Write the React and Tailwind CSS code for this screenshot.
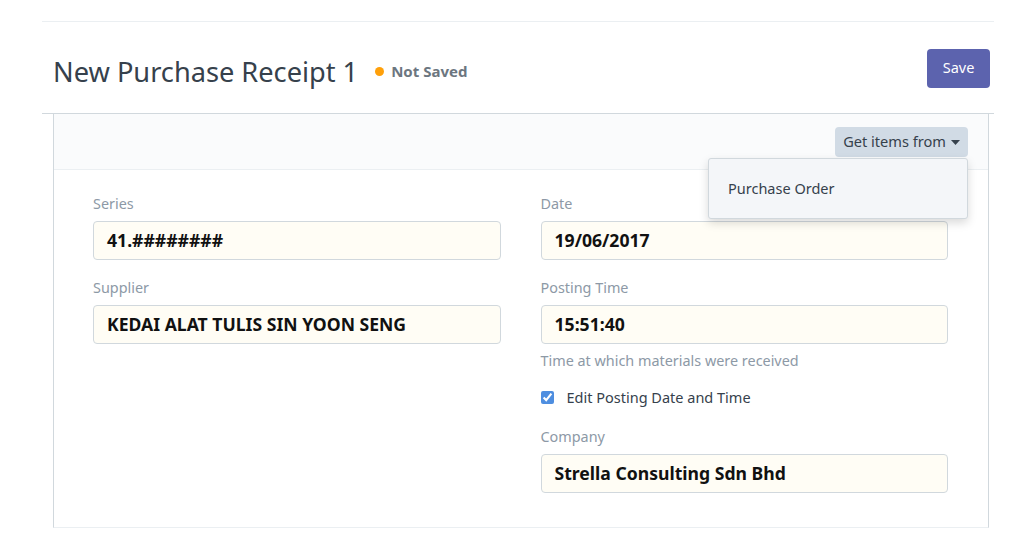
import { useState } from 'react'

function Field({ label, value, help }) {
  return (
    <div className="flex flex-col">
      <label className="text-[14.4px] leading-[20px] text-[#8d99a6] mb-[7px]">{label}</label>
      <div className="h-[39px] flex items-center px-[13px] bg-[#fffdf5] border border-[#d1d8dd] rounded-[4px] text-[17.6px] font-bold text-[#111]">
        {value}
      </div>
      {help && <p className="mt-[7px] text-[14.4px] leading-[20px] text-[#8d99a6]">{help}</p>}
    </div>
  )
}

export default function App() {
  const [editPosting, setEditPosting] = useState(true)

  return (
    <div className="w-[1035px] h-[547px] bg-white font-['Noto_Sans',sans-serif] overflow-hidden">
      <div className="ml-[42px] w-[952px] pt-[21px]">
        <div className="border-t border-[#ebeff2]" />

        <div className="h-[92px] flex items-center justify-between border-b border-[#d1d8dd]">
          <div className="flex items-center pl-[11px] mt-[8px]">
            <h1 className="text-[27.2px] leading-none text-[#36414c]">New Purchase Receipt 1</h1>
            <span className="ml-[17px] w-[9px] h-[9px] rounded-full bg-[#ffa00a]" />
            <span className="ml-[7px] text-[15px] font-bold text-[#6c7680]">Not Saved</span>
          </div>
          <button className="mr-[4px] mt-[1px] w-[63px] h-[39px] rounded-[4px] bg-[#5c63ae] text-white text-[14.5px]">
            Save
          </button>
        </div>

        <div className="ml-[11px] w-[936px] border-l border-r border-b border-[#d1d8dd] border-b-[#ebeff2]">
          <div className="relative h-[56px] bg-[#fafbfc] border-b border-[#ebeff2] flex items-start justify-end pr-[20px] pt-[13px]">
            <button className="h-[30px] px-[8px] rounded-[4px] bg-[#d1dbe5] text-[14.6px] text-[#36414c] flex items-center">
              Get items from
              <svg className="ml-[5px] w-[9px] h-[5px]" viewBox="0 0 9 5" fill="#36414c">
                <path d="M0 0h9L4.5 5z" />
              </svg>
            </button>
            <div className="absolute right-[20px] top-[44px] w-[260px] h-[61px] bg-[#f4f6f9] border border-[#d1d8dd] rounded-[3px] shadow-[0_4px_10px_rgba(0,0,0,0.15)] flex items-center pl-[19px] z-10">
              <span className="text-[14.5px] text-[#36414c]">Purchase Order</span>
            </div>
          </div>

          <div className="grid grid-cols-2 gap-x-[40px] pl-[39px] pr-[40px] pt-[24px] pb-[34px]">
            <div className="flex flex-col gap-[18px]">
              <Field label="Series" value="41.########" />
              <Field label="Supplier" value="KEDAI ALAT TULIS SIN YOON SENG" />
            </div>
            <div className="flex flex-col gap-[18px]">
              <Field label="Date" value="19/06/2017" />
              <div className="flex flex-col">
                <Field label="Posting Time" value="15:51:40" help="Time at which materials were received" />
                <label className="mt-[16px] flex items-center text-[14.5px] text-[#36414c] cursor-pointer">
                  <input
                    type="checkbox"
                    checked={editPosting}
                    onChange={() => setEditPosting(!editPosting)}
                    className="w-[13px] h-[13px] accent-[#4e8ee0]"
                  />
                  <span className="ml-[13px]">Edit Posting Date and Time</span>
                </label>
              </div>
              <Field label="Company" value="Strella Consulting Sdn Bhd" />
            </div>
          </div>
        </div>
      </div>
    </div>
  )
}
